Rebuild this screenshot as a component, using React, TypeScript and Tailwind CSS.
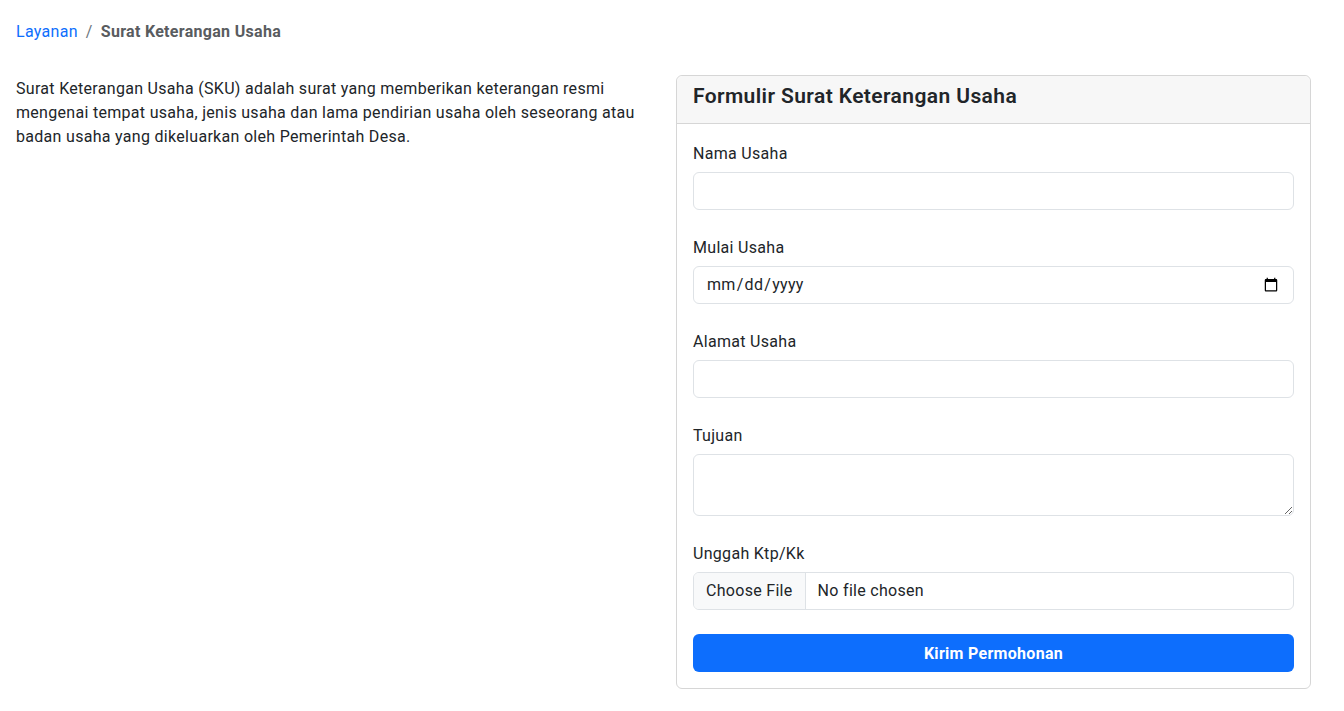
import React from "react";

const inputClass =
  "block w-full h-[38px] rounded-[6px] border border-[#dee2e6] bg-white px-3 text-base text-[#212529] outline-none";

function Field({ label, children }: { label: string; children: React.ReactNode }) {
  return (
    <div className="mb-6">
      <label className="mb-[6px] block pt-[2px] leading-6 text-[#212529]">{label}</label>
      {children}
    </div>
  );
}

export default function App() {
  return (
    <div className="min-h-screen bg-white px-4 pt-[20px] font-['Roboto',sans-serif] text-base tracking-[0.3px] text-[#212529]">
      <nav className="flex items-center leading-6">
        <a href="#" className="text-[#0d6efd]">
          Layanan
        </a>
        <span className="px-2 text-[#6c757d]">/</span>
        <span className="font-bold text-[#595c5f]">Surat Keterangan Usaha</span>
      </nav>

      <div className="mt-[31px] grid grid-cols-[634px_635px] gap-[26px]">
        <p className="mt-[2px] leading-6">
          Surat Keterangan Usaha (SKU) adalah surat yang memberikan keterangan resmi
          mengenai tempat usaha, jenis usaha dan lama pendirian usaha oleh seseorang atau
          badan usaha yang dikeluarkan oleh Pemerintah Desa.
        </p>

        <div className="rounded-[6px] border border-[#d6d6d6]">
          <div className="flex h-[48px] items-center border-b border-[#d6d6d6] bg-[#f7f7f7] px-4 pb-[5px] rounded-t-[6px]">
            <h5 className="text-[21px] font-semibold tracking-[0.4px] text-[#212529]">
              Formulir Surat Keterangan Usaha
            </h5>
          </div>
          <form className="p-4">
            <Field label="Nama Usaha">
              <input type="text" className={inputClass} />
            </Field>
            <Field label="Mulai Usaha">
              <input type="date" className={inputClass} />
            </Field>
            <Field label="Alamat Usaha">
              <input type="text" className={inputClass} />
            </Field>
            <Field label="Tujuan">
              <textarea
                rows={2}
                className="block h-[62px] w-full rounded-[6px] border border-[#dee2e6] bg-white px-3 py-1.5 text-base leading-6 outline-none"
              />
            </Field>
            <Field label="Unggah Ktp/Kk">
              <input
                type="file"
                className="block h-[38px] w-full overflow-hidden rounded-[6px] border border-[#dee2e6] bg-white text-base leading-[36px] text-[#212529] file:mr-3 file:h-[36px] file:border-0 file:border-r file:border-solid file:border-[#dee2e6] file:bg-[#f8f9fa] file:px-3 file:text-base file:tracking-[0.3px] file:text-[#212529] file:font-['Roboto',sans-serif]"
              />
            </Field>
            <button
              type="button"
              className="block h-[38px] w-full rounded-[6px] bg-[#0d6efd] pt-[1px] font-bold text-white"
            >
              Kirim Permohonan
            </button>
          </form>
        </div>
      </div>
    </div>
  );
}
